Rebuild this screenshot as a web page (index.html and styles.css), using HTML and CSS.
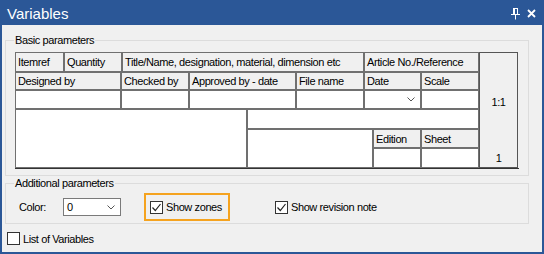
FILE: index.html
```html
<!DOCTYPE HTML>
<html>
<head>
<link rel="stylesheet" href="styles.css">
</head>
<body>
<div class="window">
  <div class="titlebar">
    <span class="title">Variables</span>
    <span class="tb-icons">
      <svg class="pin" width="11" height="12" viewBox="0 0 11 12"><path d="M3 0.5h5M3.5 0.5v6M4.5 0.5v6M7.5 0.5v6M1 6.5h9M5.5 6.5v5" stroke="#fff" stroke-width="1" fill="none"/></svg>
      <svg class="close" width="9" height="9" viewBox="0 0 9 9"><path d="M1 1l7 7M8 1l-7 7" stroke="#fff" stroke-width="1.8"/></svg>
    </span>
  </div>
  <div class="body">
    <!--basic parameters-->
    <fieldset class="group basic">
      <legend>Basic parameters</legend>
      <div class="tbl">
        <div class="tbl-main">
          <div class="row r1">
            <div class="cell hd c-itemref">Itemref</div>
            <div class="cell hd c-qty">Quantity</div>
            <div class="cell hd c-title">Title/Name, designation, material, dimension etc</div>
            <div class="cell hd c-article">Article No./Reference</div>
          </div>
          <div class="row r2">
            <div class="cell hd c-designed">Designed by</div>
            <div class="cell hd c-checked">Checked by</div>
            <div class="cell hd c-approved">Approved by - date</div>
            <div class="cell hd c-file">File name</div>
            <div class="cell hd c-date">Date</div>
            <div class="cell hd c-scale">Scale</div>
          </div>
          <div class="row r3">
            <div class="cell inp c-designed"></div>
            <div class="cell inp c-checked"></div>
            <div class="cell inp c-approved"></div>
            <div class="cell inp c-file"></div>
            <div class="cell inp c-date drop">
              <svg width="8" height="5" viewBox="0 0 8 5"><path d="M0.5 0.5l3.5 3.5l3.5-3.5" stroke="#555" stroke-width="1" fill="none"/></svg>
            </div>
            <div class="cell inp c-scale"></div>
          </div>
          <div class="row lower">
            <div class="cell inp c-half"></div>
            <div class="lower-right">
              <div class="cell inp lr-top"></div>
              <div class="lr-bottom">
                <div class="cell inp c-rev"></div>
                <div class="stack c-edition">
                  <div class="cell hd">Edition</div>
                  <div class="cell inp"></div>
                </div>
                <div class="stack c-sheet">
                  <div class="cell hd">Sheet</div>
                  <div class="cell inp"></div>
                </div>
              </div>
            </div>
          </div>
        </div>
        <div class="side"><span>1:1</span><span>1</span></div>
      </div>
    </fieldset>

    <!--additional parameters-->
    <fieldset class="group extra">
      <legend>Additional parameters</legend>
      <div class="opts">
        <span class="lbl">Color:</span>
        <div class="combo">
          <span>0</span>
          <svg width="8" height="5" viewBox="0 0 8 5"><path d="M0.5 0.5l3.5 3.5l3.5-3.5" stroke="#555" stroke-width="1" fill="none"/></svg>
        </div>
        <label class="chk highlight">
          <span class="box"><svg width="11" height="11" viewBox="0 0 11 11"><path d="M1.5 5.5l2.8 3l5.2-6.5" stroke="#222" stroke-width="1.2" fill="none"/></svg></span>
          Show zones
        </label>
        <label class="chk revision">
          <span class="box"><svg width="11" height="11" viewBox="0 0 11 11"><path d="M1.5 5.5l2.8 3l5.2-6.5" stroke="#222" stroke-width="1.2" fill="none"/></svg></span>
          Show revision note
        </label>
      </div>
    </fieldset>

    <label class="chk list"><span class="box"></span>List of Variables</label>
  </div>
</div>
</body>
</html>
```

FILE: styles.css
```css
body
{
  margin: 0;
  font-family: "Liberation Sans", Arial, sans-serif;
  font-size: 11px;
  letter-spacing: -0.4px;
  color: #000;
}
.window
{
  width: 544px;
  height: 254px;
  display: flex;
  flex-direction: column;
  background: #2b5797;
}
.titlebar
{
  height: 25px;
  flex: none;
  display: flex;
  align-items: center;
  justify-content: space-between;
  padding: 0 8px 0 7px;
  color: #fff;
}
.title
{
  font-size: 15px;
  letter-spacing: 0;
  padding-top: 2px;
}
.tb-icons
{
  display: flex;
  align-items: center;
  gap: 6px;
  padding-top: 2px;
}
.body
{
  flex: 1;
  background: #f0f0f0;
  margin: 0 2px 2px;
  padding: 9px 13px 0 3px;
}

/* group boxes */
fieldset
{
  margin: 0;
  padding: 5px 9px 7px;
  border: 1px solid #dcdcdc;
  min-width: 0;
}
legend
{
  padding: 0 1px;
  margin-left: -1px;
  line-height: 13px;
}
.extra
{
  margin-top: 1px;
  padding: 3px 9px 2px;
}

/* the title block table */
.tbl
{
  display: flex;
  height: 116px;
  box-shadow: 0 1px 0 #333;
}
.tbl-main
{
  width: 464px;
}
.row
{
  display: flex;
}
.r1 { height: 20px; }
.r2 { height: 18px; }
.r3 { height: 19px; }
.lower { height: 59px; }
.cell
{
  box-sizing: border-box;
  border: 1px solid #707070;
  padding: 0 2px;
  display: flex;
  align-items: center;
  white-space: nowrap;
  overflow: hidden;
}
.hd { background: #f0f0f0; }
.inp { background: #fff; }
.c-itemref { width: 49px; }
.c-qty { width: 58px; }
.c-title { width: 242px; }
.c-article { width: 115px; }
.c-designed { width: 106px; }
.c-checked { width: 68px; }
.c-approved { width: 107px; }
.c-file { width: 68px; }
.c-date { width: 57px; }
.c-scale { width: 58px; }
.c-half { width: 232px; }
.drop
{
  justify-content: flex-end;
  padding-right: 5px;
}
.lower-right
{
  width: 232px;
  display: flex;
  flex-direction: column;
}
.lr-top { height: 20px; }
.lr-bottom
{
  display: flex;
  height: 39px;
}
.c-rev { width: 126px; }
.stack
{
  display: flex;
  flex-direction: column;
}
.stack .hd { height: 19px; }
.stack .inp { height: 20px; }
.c-edition { width: 48px; }
.c-sheet { width: 58px; }
.side
{
  width: 39px;
  box-sizing: border-box;
  border: 1px solid #555;
  background: #f0f0f0;
  display: flex;
  flex-direction: column;
  justify-content: space-between;
  align-items: center;
  padding: 43px 0 2px;
  line-height: 13px;
}

/* additional parameters row */
.opts
{
  display: flex;
  align-items: center;
  height: 28px;
  margin-left: 4px;
}
.lbl
{
  width: 44px;
}
.combo
{
  box-sizing: border-box;
  width: 58px;
  height: 18px;
  border: 1px solid #7a7a7a;
  background: #fff;
  display: flex;
  align-items: center;
  justify-content: space-between;
  padding: 0 5px 0 3px;
}
.chk
{
  display: flex;
  align-items: center;
  gap: 3px;
}
.box
{
  box-sizing: border-box;
  width: 13px;
  height: 13px;
  border: 1px solid #333;
  background: #fff;
  display: flex;
}
.highlight
{
  box-sizing: border-box;
  height: 28px;
  width: 86px;
  margin-left: 23px;
  border: 2px solid #f5a31f;
  padding: 0 4px;
}
.revision
{
  margin-left: 45px;
}
.list
{
  margin: 8px 0 0 2px;
}
```
